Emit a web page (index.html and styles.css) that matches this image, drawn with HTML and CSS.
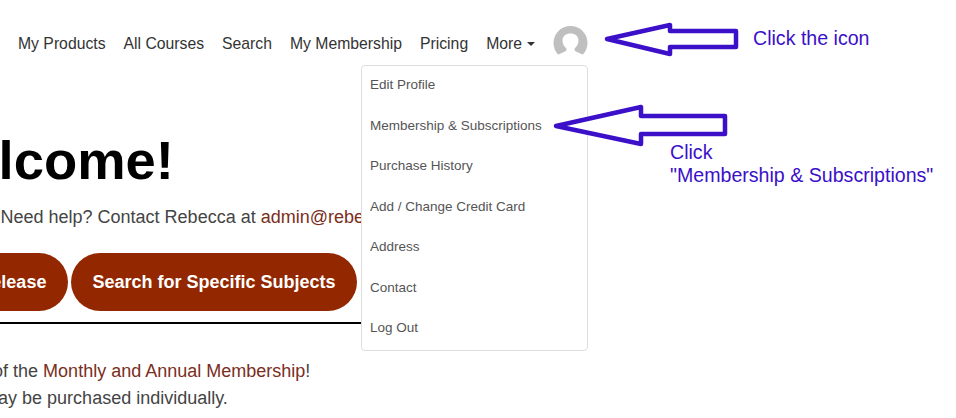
FILE: index.html
```html
<!DOCTYPE html>
<html lang="en">
<head>
	<meta charset="UTF-8">
	<title>Membership help</title>
	<link rel="stylesheet" href="styles.css">
</head>
<body>
	<nav class="topnav">
		<a href="#">My Products</a>
		<a href="#">All Courses</a>
		<a href="#">Search</a>
		<a href="#">My Membership</a>
		<a href="#">Pricing</a>
		<a href="#" class="more">More <span class="caret"></span></a>
		<svg class="avatar" width="35" height="35" viewBox="0 0 35 35">
			<circle cx="17.500" cy="17" r="17" fill="#bfbfbf"/>
			<path d="M0 35V31L12 25.500C14 24.500 14 23 12.500 21.500C10 19 9.500 16.500 9.500 14.500C9.500 10 13 7.500 17.500 7.500C22 7.500 25.500 10 25.500 14.500C25.500 16.500 25 19 22.500 21.500C21 23 21 24.500 23 25.500L35 31V35Z" fill="#fff"/>
		</svg>
	</nav>

	<div class="dropdown">
		<a href="#">Edit Profile</a>
		<a href="#">Membership &amp; Subscriptions</a>
		<a href="#">Purchase History</a>
		<a href="#">Add / Change Credit Card</a>
		<a href="#">Address</a>
		<a href="#">Contact</a>
		<a href="#">Log Out</a>
	</div>

	<main class="content">
		<h1>Welcome!</h1>
		<p class="help">Need help? Contact Rebecca at <a href="#">admin@rebeccasmith.com</a></p>
		<div class="buttons">
			<a href="#" class="btn">Latest Release</a>
			<a href="#" class="btn">Search for Specific Subjects</a>
		</div>
		<hr>
		<p class="note">All courses are part of the <a href="#">Monthly and Annual Membership</a>!</p>
		<p class="note">Any other courses may be purchased individually.</p>
	</main>

	<!-- annotations drawn over the screenshot -->
	<svg class="arrows" width="956" height="418" viewBox="0 0 956 418">
		<path d="M607 39 670 25V31H736V47H670V54Z"/>
		<path d="M556 126 641 107V116H725V134H641V144Z"/>
	</svg>
	<div class="tip tip_icon">Click the icon</div>
	<div class="tip tip_menu">Click<br>"Membership &amp; Subscriptions"</div>
</body>
</html>
```

FILE: styles.css
```css
html,body{
	margin: 0;
	padding: 0;
	height: 418px;
	overflow: hidden;
}
body{
	position: relative;
	background: #fff;
	color: #333;
	font-family: "Liberation Sans", Arial, sans-serif;
}
a{
	text-decoration: none;
}
.topnav{
	display: flex;
	align-items: center;
	height: 35px;
	padding: 26px 0 0 18px;
}
.topnav a{
	margin-right: 18px;
	font-size: 15.750px;
	color: #333;
}
.caret{
	display: inline-block;
	margin-left: 1px;
	vertical-align: 3px;
	border-top: 4px solid #333;
	border-left: 4px solid transparent;
	border-right: 4px solid transparent;
}
.dropdown{
	position: absolute;
	top: 65px;
	left: 361px;
	box-sizing: border-box;
	width: 227px;
	height: 286px;
	padding: 0;
	background: #fff;
	border: 1px solid #ddd;
	border-radius: 4px;
}
.dropdown a{
	display: block;
	height: 40.500px;
	padding-left: 8px;
	line-height: 38.800px;
	font-size: 13.500px;
	color: #555;
}
.content{
	margin-left: -60px;
	padding-top: 70px;
	width: 421px;
	white-space: nowrap;
}
h1{
	margin: 0 0 0 -22px;
	font-size: 54.400px;
	line-height: 60px;
	color: #000;
}
.help{
	margin: 14px 0 0 60.500px;
	font-size: 18px;
	line-height: 24px;
	color: #444;
}
.help a,.note a{
	color: #7a2e1c;
}
.buttons{
	display: flex;
	justify-content: flex-end;
	gap: 3px;
	margin-top: 24px;
	padding-right: 4px;
}
.btn{
	display: block;
	height: 58px;
	padding: 0 21.500px;
	line-height: 58px;
	border-radius: 29px;
	background: #922700;
	color: #fff;
	font-size: 18px;
	font-weight: bold;
}
hr{
	height: 2px;
	margin: 11px 0 0;
	background: #000;
	border: 0;
}
.note{
	margin: 0 0 0 -107px;
	font-size: 18px;
	line-height: 27px;
	color: #444;
}
hr + .note{
	margin-top: 34px;
}
.arrows{
	position: absolute;
	top: 0;
	left: 0;
	fill: #fff;
	stroke: #3b10c8;
	stroke-width: 4.500;
	stroke-linejoin: round;
}
.tip{
	position: absolute;
	font-size: 19.600px;
	line-height: 23px;
	color: #3b10c8;
}
.tip_icon{
	top: 27px;
	left: 753px;
}
.tip_menu{
	top: 141px;
	left: 670px;
}
```
